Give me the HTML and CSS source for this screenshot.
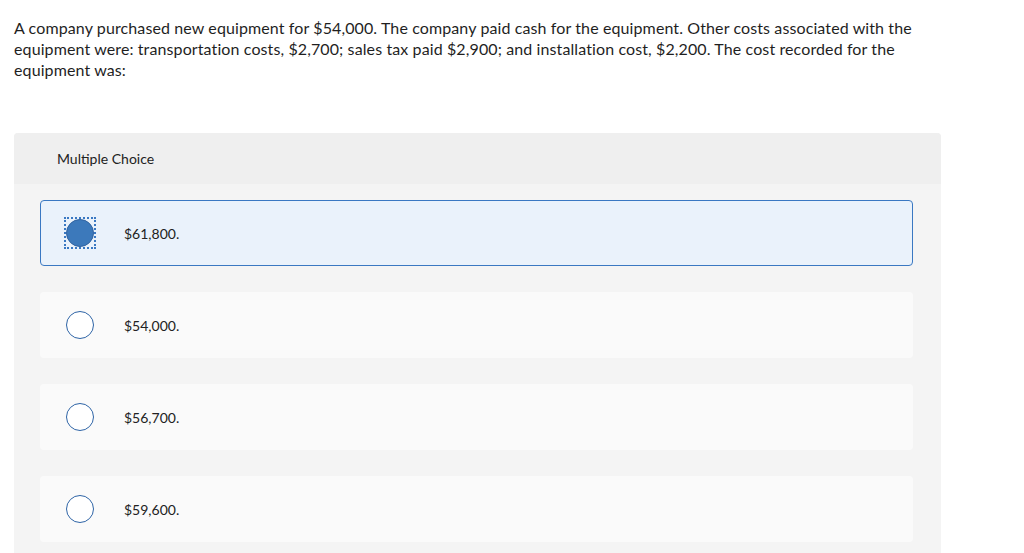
FILE: index.html
```html
<!DOCTYPE html>
<html lang="en">
<head>
<meta charset="utf-8">
<title>Multiple Choice</title>
<link rel="stylesheet" href="styles.css">
</head>
<body>
<div class="page">
  <p class="question">A company purchased new equipment for $54,000. The company paid cash for the equipment. Other costs associated with the equipment were: transportation costs, $2,700; sales tax paid $2,900; and installation cost, $2,200. The cost recorded for the equipment was:</p>
  <section class="panel">
    <div class="panel-head">Multiple Choice</div>
    <div class="options">
      <div class="option selected">
        <span class="radio-focus"><span class="radio checked"></span></span>
        <span class="label">$61,800.</span>
      </div>
      <div class="option">
        <span class="radio-wrap"><span class="radio"></span></span>
        <span class="label">$54,000.</span>
      </div>
      <div class="option">
        <span class="radio-wrap"><span class="radio"></span></span>
        <span class="label">$56,700.</span>
      </div>
      <div class="option">
        <span class="radio-wrap"><span class="radio"></span></span>
        <span class="label">$59,600.</span>
      </div>
    </div>
  </section>
</div>
</body>
</html>
```

FILE: styles.css
```css
html, body {
  margin: 0;
  padding: 0;
  background: #ffffff;
}
body {
  font-family: "Lato", "Liberation Sans", sans-serif;
  color: #222222;
}
.page {
  padding: 17px 0 0 14px;
  width: 927px;
}
.question {
  margin: 0;
  font-size: 16px;
  line-height: 21px;
  letter-spacing: 0.11px;
  color: #1f1f1f;
}
.panel {
  margin-top: 53px;
  background: #f4f4f4;
  border-radius: 4px 4px 0 0;
}
.panel-head {
  height: 51px;
  display: flex;
  align-items: center;
  padding-left: 43px;
  background: #efefef;
  border-radius: 4px 4px 0 0;
  font-size: 14px;
  color: #222222;
}
.options {
  display: flex;
  flex-direction: column;
  gap: 26px;
  padding: 16px 28px 16px 26px;
}
.option {
  height: 66px;
  box-sizing: border-box;
  display: flex;
  align-items: center;
  background: #fafafa;
  border-radius: 4px;
  padding-left: 26px;
}
.option.selected {
  background: #eaf2fb;
  border: 1px solid #3a78c2;
  padding-left: 25px;
}
.radio-focus {
  display: flex;
  outline: 2px dotted #3a78c2;
  outline-offset: 0;
}
.radio-wrap {
  display: flex;
}
.radio {
  width: 28px;
  height: 28px;
  box-sizing: border-box;
  border-radius: 50%;
  border: 1px solid #2e64a6;
  background: #ffffff;
}
.radio.checked {
  background: #3c79bb;
  border-color: #2f62a0;
}
.label {
  margin-left: 30px;
  font-size: 14px;
  color: #222222;
}
```
